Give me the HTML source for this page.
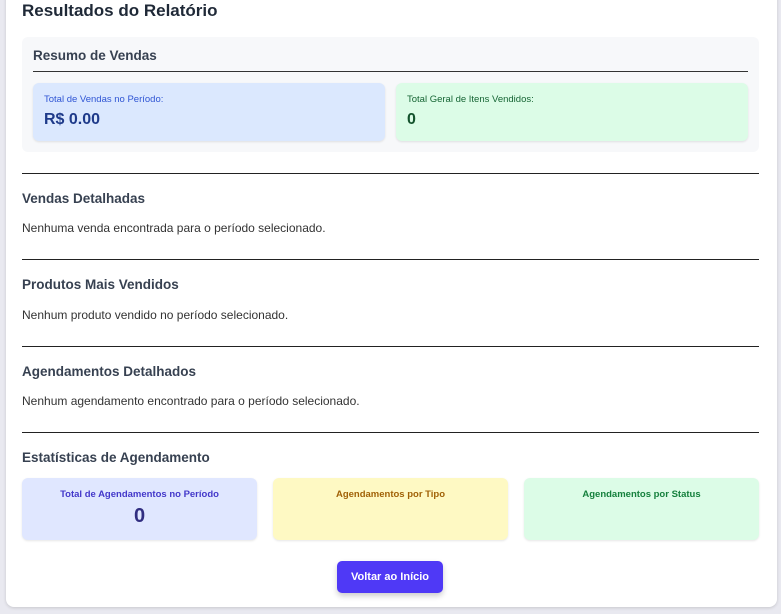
<!DOCTYPE html>
<html><head><style>
*{margin:0;padding:0;box-sizing:border-box}
body{width:781px;height:614px;background:#e9e9f0;font-family:"Liberation Sans",sans-serif;position:relative;overflow:hidden}
.card{position:absolute;left:6px;top:-10px;width:771px;height:617px;background:#fff;border-radius:8px;box-shadow:0 1px 3px rgba(0,0,0,.15)}
.a{position:absolute}
h1{position:absolute;left:22px;top:1px;font-size:17px;color:#1f2937;font-weight:bold}
.sum{left:22px;top:37px;width:737px;height:115px;background:#f7f8fa;border-radius:6px}
.h3{font-size:13.5px;font-weight:bold;color:#374151}
.hr{left:22px;width:737px;height:1px;background:#222}
.t{font-size:12px;color:#333}
.box{border-radius:6px;box-shadow:0 1px 2px rgba(0,0,0,.1)}
</style></head><body>
<div class="card"></div>
<h1>Resultados do Relatório</h1>
<div class="a sum"></div>
<div class="a h3" style="left:33px;top:48px">Resumo de Vendas</div>
<div class="a" style="left:33px;top:71px;width:715px;height:1px;background:#333"></div>
<div class="a box" style="left:33px;top:83px;width:352px;height:58px;background:#dbe8fe">
<div class="a" style="left:11px;top:11px;font-size:9.5px;color:#2f55d4">Total de Vendas no Período:</div>
<div class="a" style="left:11px;top:28px;font-size:16px;font-weight:bold;color:#1e3a8a">R$ 0.00</div></div>
<div class="a box" style="left:396px;top:83px;width:352px;height:58px;background:#dcfce7">
<div class="a" style="left:11px;top:11px;font-size:9.5px;color:#166534">Total Geral de Itens Vendidos:</div>
<div class="a" style="left:11px;top:28px;font-size:16px;font-weight:bold;color:#14532d">0</div></div>
<div class="a hr" style="top:173px"></div>
<div class="a h3" style="left:22px;top:191px">Vendas Detalhadas</div>
<div class="a t" style="left:22px;top:221px">Nenhuma venda encontrada para o período selecionado.</div>
<div class="a hr" style="top:259px"></div>
<div class="a h3" style="left:22px;top:277px">Produtos Mais Vendidos</div>
<div class="a t" style="left:22px;top:308px">Nenhum produto vendido no período selecionado.</div>
<div class="a hr" style="top:346px"></div>
<div class="a h3" style="left:22px;top:364px">Agendamentos Detalhados</div>
<div class="a t" style="left:22px;top:394px">Nenhum agendamento encontrado para o período selecionado.</div>
<div class="a hr" style="top:432px"></div>
<div class="a h3" style="left:22px;top:450px">Estatísticas de Agendamento</div>
<div class="a box" style="left:22px;top:478px;width:235px;height:62px;background:#e0e7ff;text-align:center">
<div style="margin-top:11px;font-size:9.5px;font-weight:bold;color:#4338ca">Total de Agendamentos no Período</div>
<div style="margin-top:5px;font-size:20px;font-weight:bold;color:#312e81">0</div></div>
<div class="a box" style="left:273px;top:478px;width:235px;height:62px;background:#fef9c3;text-align:center">
<div style="margin-top:11px;font-size:9.5px;font-weight:bold;color:#a16207">Agendamentos por Tipo</div></div>
<div class="a box" style="left:524px;top:478px;width:235px;height:62px;background:#dcfce7;text-align:center">
<div style="margin-top:11px;font-size:9.5px;font-weight:bold;color:#15803d">Agendamentos por Status</div></div>
<div class="a" style="left:337px;top:561px;width:106px;height:32px;background:#4f39f6;border-radius:5px;box-shadow:0 3px 6px rgba(0,0,0,.2);color:#fff;font-size:11px;font-weight:bold;text-align:center;line-height:32px">Voltar ao Início</div>
</body></html>
